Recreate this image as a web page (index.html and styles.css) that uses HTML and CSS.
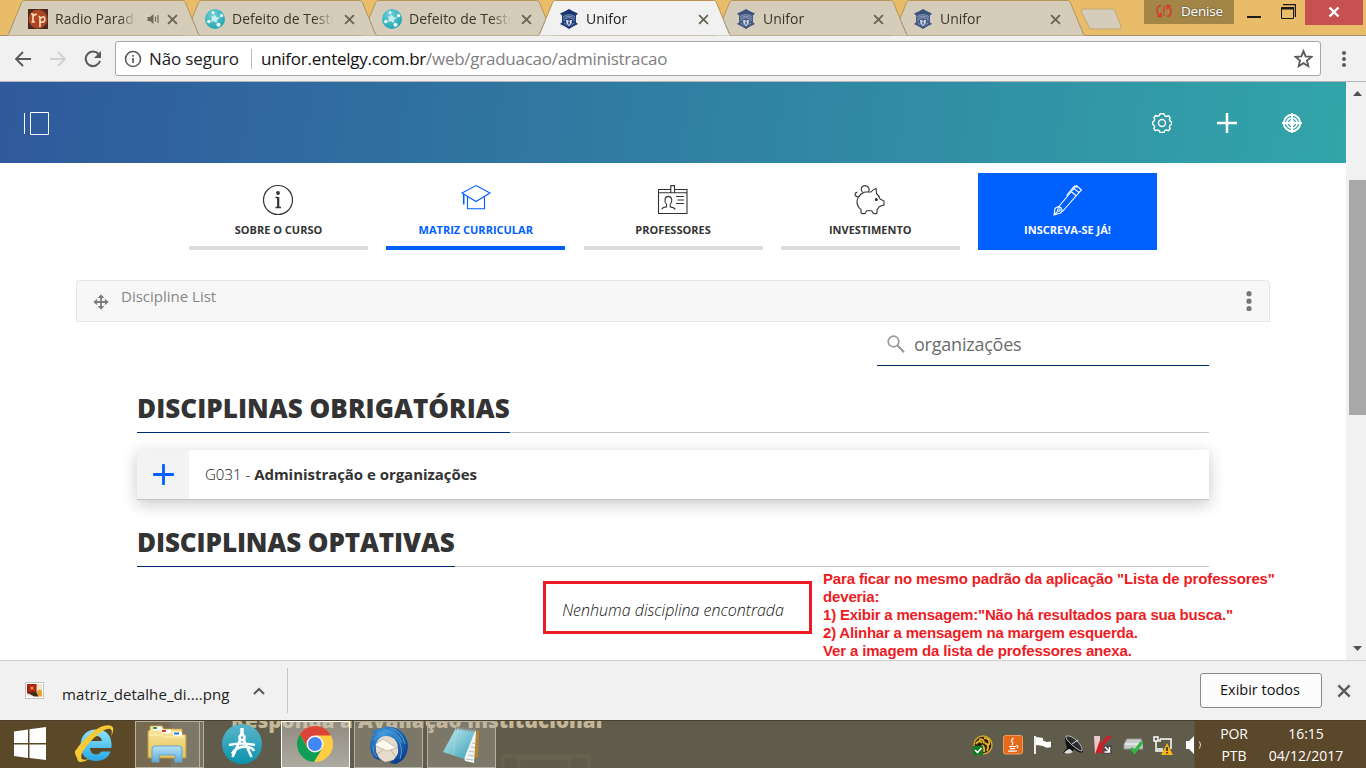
FILE: index.html
```html
<!DOCTYPE html>
<html lang="pt-BR">
<head>
<meta charset="utf-8">
<title>Unifor</title>
<link rel="stylesheet" href="styles.css">
</head>
<body>
<svg class="defs" width="0" height="0">
  <defs>
    <linearGradient id="ieg" x1="0" y1="0" x2="0" y2="1"><stop offset="0" stop-color="#8fe4fb"/><stop offset="1" stop-color="#28a8e6"/></linearGradient>
    <linearGradient id="fold" x1="0" y1="0" x2="0" y2="1"><stop offset="0" stop-color="#fbe9a0"/><stop offset="1" stop-color="#e3c35c"/></linearGradient>
    <linearGradient id="stand" x1="0" y1="0" x2="0" y2="1"><stop offset="0" stop-color="#b6e2f6"/><stop offset="1" stop-color="#5fa9d8"/></linearGradient>
    <linearGradient id="note" x1="0" y1="0" x2="1" y2="1"><stop offset="0" stop-color="#c5eef3"/><stop offset="1" stop-color="#3a9fb4"/></linearGradient>
    <radialGradient id="bird" cx=".35" cy=".25" r=".8"><stop offset="0" stop-color="#3f9be0"/><stop offset="1" stop-color="#0c3f8c"/></radialGradient>
    <radialGradient id="teal" cx=".4" cy=".3" r=".8"><stop offset="0" stop-color="#6fd0da"/><stop offset="1" stop-color="#18a0ae"/></radialGradient>
    <linearGradient id="circ" x1="0" y1="0" x2="0" y2="1"><stop offset="0" stop-color="#5ab6cb"/><stop offset="1" stop-color="#0b93ae"/></linearGradient>
    <symbol id="globe" viewBox="0 0 20 20">
      <circle cx="10" cy="10" r="10" fill="url(#teal)"/>
      <g stroke="#8fdbe0" stroke-width=".7" fill="none"><path d="M10 10 8 3M10 10l7-3M10 10l4 6M10 10l-6 2"/></g>
      <path d="M9.500 5.500l2 2.500 3 1-2.500 2-.5 3-2.500-1.700-3 .3 1-2.800L6 7.500l2.700-.2z" fill="#c9eeee"/><circle cx="8" cy="3.600" r="1.400" fill="#fff"/><circle cx="16.600" cy="6.600" r="1.600" fill="#fff"/><circle cx="13.500" cy="15.800" r="2" fill="#fff"/><circle cx="3.800" cy="12.600" r="1.700" fill="#fff"/>
    </symbol>
    <symbol id="crest" viewBox="0 0 20 20">
      <path d="M10 0l4 2.200 5 2.300-2 2H3l-2-2 5-2.300zM1 15l2.500-2h13l2.500 2-5 2.500-4 2.500-4-2.500z" fill="#15336f"/>
      <path d="M3 5h14v9.500l-4 3H7l-4-3z" fill="#233f7b"/>
      <g fill="none" stroke="#93a4c7" stroke-width=".8"><path d="M4 8a7 4.500 0 0 1 12 0M4 10.200a6.500 4.800 0 0 1 12 0M4.500 12.200a5.700 4.800 0 0 1 11 0M5 14l2.500 2M15 14l-2.500 2"/></g>
      <path d="M7 11h1.500l1.500 1 1.500-1H13l-.5 3.500-2.500 3-2.500-3z" fill="#d5dce9"/><path d="M9.300 12.500h1.400v3H9.300z" fill="#15336f"/>
    </symbol>
    <symbol id="x" viewBox="0 0 10 10"><path d="M1 1l8 8M9 1L1 9" stroke="currentColor" stroke-width="1.700"/></symbol>
    <symbol id="shape" viewBox="0 0 193 36">
      <path d="M0 35.500C1 35 1.600 34 2 33L14 4C14.700 2 15.500 .5 17.500 .5H175.500C177.500 .5 178.300 2 179 4L191 33C191.400 34 192 35 193 35.500" fill="currentColor" stroke="#b59455"/>
      <path d="M7 21L1.500 34M186 21L191.500 34" stroke="#a99f8c" fill="none"/>
    </symbol>
  </defs>
</svg>

<header class="tabstrip">
  <div class="tabs">
    <div class="tab t1"><svg class="shape"><use href="#shape"/></svg>
      <svg class="fav" viewBox="0 0 20 20"><rect width="20" height="20" fill="#4a2a1d"/><circle cx="10" cy="10" r="9.500" fill="#ad4526"/><path d="M3 5h2v8M3.500 13H7M5 7.500Q6 5 9 5.500M12 7.500V18M10.500 7.500H12M12 9.500Q16.500 6 16.800 10T12 13" stroke="#f7d9ad" stroke-width="1.700" fill="none"/></svg>
      <span class="name short">Radio Paradise</span>
      <svg class="snd" viewBox="0 0 12 12"><path d="M0 4h2.500L6 1v10L2.500 8H0z" fill="#716b5e"/><path d="M8 3.500v5M10.500 2v8" stroke="#716b5e" stroke-width="1.200"/></svg>
      <svg class="cls"><use href="#x"/></svg></div>
    <div class="tab t2"><svg class="shape"><use href="#shape"/></svg><svg class="fav"><use href="#globe"/></svg><span class="name">Defeito de Teste</span><svg class="cls"><use href="#x"/></svg></div>
    <div class="tab t3"><svg class="shape"><use href="#shape"/></svg><svg class="fav"><use href="#globe"/></svg><span class="name">Defeito de Teste</span><svg class="cls"><use href="#x"/></svg></div>
    <div class="tab t4 on"><svg class="shape"><use href="#shape"/></svg><svg class="fav"><use href="#crest"/></svg><span class="name">Unifor</span><svg class="cls"><use href="#x"/></svg></div>
    <div class="tab t5"><svg class="shape"><use href="#shape"/></svg><svg class="fav dim"><use href="#crest"/></svg><span class="name">Unifor</span><svg class="cls"><use href="#x"/></svg></div>
    <div class="tab t6"><svg class="shape"><use href="#shape"/></svg><svg class="fav dim"><use href="#crest"/></svg><span class="name">Unifor</span><svg class="cls"><use href="#x"/></svg></div>
  </div>
  <svg class="newtab" viewBox="0 0 42 22"><path d="M3 1h29q2 0 3 2l6 15q1 3-2 3H12q-2 0-3-2L1.500 4Q.5 1 3 1z" fill="#d5ccba" stroke="#c2a873"/></svg>
  <div class="user"><svg width="16" height="14" viewBox="0 0 16 14"><path d="M5 1.500Q1 2 1 6t3.500 6M1 12.500h4V8.500M11 12.500Q15 12 15 8t-3.500-6M15 1.500h-4V5.500" stroke="#d23f2e" stroke-width="1.700" fill="none"/><path d="M8 2v6M8 9.500v2" stroke="#d23f2e" stroke-width="1.600"/></svg><span>Denise</span></div>
  <svg class="min" viewBox="0 0 14 2"><rect width="14" height="2" fill="#1e1a14"/></svg>
  <svg class="restore" viewBox="0 0 15 15"><path d="M2 .5h12.500V13" stroke="#1e1a14" fill="none" stroke-width="1.500"/><path d="M.5 3.500h12v11H.5z" stroke="#1e1a14" fill="none"/><path d="M0 4.500h13" stroke="#1e1a14" stroke-width="2"/></svg>
  <div class="close"><svg width="12" height="10" viewBox="0 0 12 10"><path d="M1.500 .5l9 9M10.500 .5l-9 9" stroke="#fff" stroke-width="2.400"/></svg></div>
</header>

<div class="toolbar">
  <svg class="back" viewBox="0 0 16 16"><path d="M16 8H1.500M8 1L1 8l7 7" stroke="#5a5a5a" stroke-width="1.900" fill="none"/></svg>
  <svg class="fwd" viewBox="0 0 16 16"><path d="M0 8h14.500M8 1l7 7-7 7" stroke="#d1d1d1" stroke-width="1.900" fill="none"/></svg>
  <svg class="reload" viewBox="0 0 18 18"><path d="M14.500 4A7.300 7.300 0 1 0 16 11" stroke="#5a5a5a" stroke-width="2.100" fill="none"/><path d="M17 1v7h-7z" fill="#5a5a5a"/></svg>
  <div class="omni">
    <svg class="info" viewBox="0 0 18 18"><circle cx="9" cy="9" r="7.500" stroke="#5a5a5a" stroke-width="1.600" fill="none"/><path d="M9 8v5M9 5v1.700" stroke="#5a5a5a" stroke-width="1.700"/></svg>
    <span class="sec">Não seguro</span><i class="bar"></i>
    <span class="url"><b>unifor.entelgy.com.br</b>/web/graduacao/administracao</span>
    <svg class="star" viewBox="0 0 18 18"><path d="M9 2l2 5 5.500.4-4.200 3.600 1.300 5.300L9 13.400l-4.600 2.900L5.700 11 1.500 7.400 7 7z" fill="none" stroke="#5a5a5a" stroke-width="1.700"/></svg>
  </div>
  <svg class="dots" viewBox="0 0 4 16"><g fill="#5a5a5a"><circle cx="2" cy="2" r="2"/><circle cx="2" cy="8" r="2"/><circle cx="2" cy="14" r="2"/></g></svg>
</div>

<div class="view">
  <main class="page">
    <div class="hero">
      <svg class="menu" viewBox="0 0 26 24"><path d="M.5 1v21M6.500 .5h18v22h-18z" stroke="#fff" fill="none"/></svg>
      <div class="tools">
        <svg width="20" height="20" viewBox="0 0 20 20" fill="none" stroke="#fff" stroke-width="1.400"><circle cx="10" cy="10" r="3.500"/><path d="M8 .8h4l.7 2 1.800.7 2-.9 1.600 2-.7 2 .8 1.700 1.400.7v2.200l-1.400.8-.8 1.700.7 2-1.700 2-2-.9-1.700.8-.7 1.800H8l-.7-1.800-1.800-.8-2 .9-1.600-2 .7-2-.8-1.700L.7 11.200V9l1.200-.8.8-1.700-.7-2 1.600-2 2 .9 1.700-.7z" stroke-linejoin="round"/></svg>
        <svg width="20" height="20" viewBox="0 0 20 20"><path d="M10 0v20M0 10h20" stroke="#fff" stroke-width="2.500"/></svg>
        <svg width="20" height="20" viewBox="0 0 20 20" fill="none" stroke="#fff"><circle cx="10" cy="10" r="8.200" stroke-width="2"/><circle cx="10" cy="10" r="5.200" stroke-width="1.800"/><circle cx="10" cy="10" r="2.300" stroke-width="1.200"/><path d="M10 0v20M0 10h20" stroke-width="2"/></svg>
      </div>
    </div>
    <nav class="menu-course">
      <a class="item"><svg class="info-icon" width="32" height="32" viewBox="0 0 32 32"><circle cx="16" cy="16" r="14.500" fill="none" stroke="#333" stroke-width="1.200"/><circle cx="16" cy="9" r="1.900" fill="#333"/><path d="M13.500 13.500h2.500M13.500 23.500h5.500" stroke="#333" fill="none" stroke-width="1.300"/><path d="M16.200 13v11" stroke="#333" stroke-width="2.200"/></svg><span>SOBRE O CURSO</span></a>
      <a class="item active"><svg width="32" height="32" viewBox="0 0 32 32" fill="none" stroke="#0060ff" stroke-width="1.100"><path d="M16 1.500L30 9 16 17.500 2 9zM7.500 12.500v12.300h17V12.500"/><path d="M3.700 10v10.500" stroke-width="1.600"/></svg><span>MATRIZ CURRICULAR</span></a>
      <a class="item"><svg width="32" height="32" viewBox="0 0 32 32" fill="none" stroke="#333" stroke-width="1.100"><path d="M13.500 5.500H1.500v24h28.500v-24H18M1.500 8.700h12M18 8.700h12M13.800 1.600h3.700v7.200h-3.700zM19 12.500h8M20.500 16h6.500M19 19.500h8"/><path d="M5 25.500q0-2 4.500-2.600v-2.500q-2-2-1.500-5 .5-3 3.300-3t3.400 3q.5 3-1.500 5v2.500q4 .6 5 2.500"/></svg><span>PROFESSORES</span></a>
      <a class="item"><svg width="32" height="32" viewBox="0 0 32 32" fill="none" stroke="#333" stroke-width="1.100"><path d="M4.500 13Q7 9 11 8h6q2.500-3 5-3.500l.5 5Q25.500 12 26 15l4 2v4l-4.500 1.500L23 26v3q-1.500 1.500-4 0l-1.200-2.200h-5L11 29.500q-2.500.5-4-.5v-3.300Q2.700 22 3 17q.3-2.500 1.500-4zM4.500 13Q1 12.500 1 10.500q.3-2.500 2.500-2.300"/><path d="M8.500 8Q6 5 8.500 2.500 11.500 .5 14 3q2 2 .5 5"/><circle cx="22.300" cy="15.500" r="1" fill="#333"/></svg><span>INVESTIMENTO</span></a>
      <a class="item cta"><svg width="32" height="32" viewBox="0 0 32 32" fill="none" stroke="#fff" stroke-width="1.100"><path d="M6 23.500L22 4.500l5 4-16.500 19M22 4.500l2.500-3 5 4.500-2.500 2.500M14.500 11.500L22.500 2l3 1M19 7.500l5 4M2 31l1-6.500q3-3 6.200-.5 2 3-.7 5zM2 31l3.500-3.500"/><circle cx="6.800" cy="26" r="1.300"/></svg><span>INSCREVA-SE JÁ!</span></a>
    </nav>
    <section class="portlet">
      <svg class="move" viewBox="0 0 16 16"><path d="M8 2v12M2 8h12" stroke="#7c7c7c" stroke-width="1.800"/><path d="M8 .3l3.300 3.800H4.700zM8 15.700l3.300-3.800H4.700zM.3 8l3.800-3.300v6.600zM15.700 8l-3.800-3.300v6.600z" fill="#7c7c7c"/></svg>
      <span class="ptitle">Discipline List</span>
      <svg class="pdots" viewBox="0 0 6 20"><g fill="#777"><circle cx="3" cy="2.700" r="2.600"/><circle cx="3" cy="10.200" r="2.600"/><circle cx="3" cy="17.700" r="2.600"/></g></svg>
    </section>
    <div class="content">
      <div class="search"><svg width="18" height="18" viewBox="0 0 18 18" fill="none" stroke="#999"><circle cx="6.500" cy="6.500" r="5.300" stroke-width="1.700"/><path d="M10.300 10.300l6.700 7" stroke-width="2.100"/></svg><span>organizações</span></div>
      <h2 class="h-one"><span>DISCIPLINAS OBRIGATÓRIAS</span></h2>
      <div class="card"><div class="plus"><svg width="21" height="21" viewBox="0 0 21 21"><path d="M10.500 1v19M1 10.500h19" stroke="#0060ff" stroke-width="2.800" stroke-linecap="round"/></svg></div><p>G031 - <b>Administração e organizações</b></p></div>
      <h2 class="h-two"><span>DISCIPLINAS OPTATIVAS</span></h2>
      <p class="empty">Nenhuma disciplina encontrada</p>
    </div>
    <div class="mark"></div>
    <div class="note">Para ficar no mesmo padrão da aplicação "Lista de professores"<br>deveria:<br><span>1) Exibir a mensagem:"Não há resultados para sua busca."</span><br><span>2) Alinhar a mensagem na margem esquerda.</span><br>Ver a imagem da lista de professores anexa.</div>
  </main>
  <div class="scroll">
    <svg width="9" height="5" viewBox="0 0 9 5"><path d="M0 5L4.500 0 9 5z" fill="#505050"/></svg>
    <div class="thumb"></div>
    <svg class="down" width="9" height="5" viewBox="0 0 9 5"><path d="M0 0l4.500 5L9 0z" fill="#505050"/></svg>
  </div>
</div>

<div class="downloads">
  <div class="file">
    <svg width="19" height="17" viewBox="0 0 19 17"><path d="M.5 .5h18v16H.5z" fill="#fff" stroke="#c2c2c2"/><path d="M2 2h15v12.500H2z" fill="#f1e6cc"/><path d="M2 2h9.500v8L8 11.500H2z" fill="#a51d13"/><path d="M4 3l6 6M10 3L4 9" stroke="#d8442a"/><circle cx="7" cy="6" r="1.600" fill="#e8a030"/><path d="M3 11l8-1.500 3 5H9z" fill="#403019"/><path d="M12 9l2-1.500 3 1v6h-4z" fill="#eca12c"/></svg>
    <span>matriz_detalhe_di....png</span>
    <svg class="up" width="12" height="8" viewBox="0 0 12 8"><path d="M1 7l5-5 5 5" stroke="#5a5a5a" stroke-width="2" fill="none"/></svg>
  </div>
  <button class="all">Exibir todos</button>
  <svg class="dclose"><use href="#x"/></svg>
</div>

<footer class="taskbar">
  <div class="ghost">Responda a Avaliação Institucional</div>
  <svg class="tb-glow" viewBox="0 0 90 14"><path d="M2 14V2h86v12M18 14V5h50v9" stroke="#757056" stroke-width="3" fill="none"/></svg>
  <div class="apps">
    <div class="app start"><svg width="32" height="33" viewBox="0 0 32 33" fill="#fff"><path d="M0 4.500L14 2.500V16H0zM15.500 2.300L32 0v16H15.500zM0 17.500h14V31L0 29zM15.500 17.500H32V33l-16.500-2z"/></svg></div>
    <div class="app ie"><svg width="40" height="40" viewBox="0 0 40 40"><path d="M21 5.500C11 5.500 5.500 12.500 5.500 21.500S11.500 37 21 37c7.500 0 12.500-3.500 14.500-9.500h-9.500q-1.500 3-5 3-5.500 0-6-6.500h21.500Q37.500 5.500 21 5.500zM15 17q.8-5 6-5t6 5z" fill="url(#ieg)" fill-rule="evenodd"/><path d="M7 24C1 33 1 38 6 38q4-.3 9-3.500-8 3-9-1-.5-5 9-15.500C25 7.500 32 3.500 35.500 5q2.500 1.500.3 8Q41 3.500 35.500 1.500 28-.5 17 8.500 6 18-.5 28 3 38.500 6 38" fill="#f5ca35"/></svg></div>
    <div class="app run explorer"><svg width="40" height="40" viewBox="0 0 40 40"><path d="M3 2h12l2 3h18v5l4 1v23H1V7l2-1z" fill="url(#fold)" stroke="#bd993d"/><path d="M6 2.500h9v4H6zM15 5.500h9v4h-9zM26 8h9v4h-9z" fill="#fff"/><path d="M6 3h4v2H6z" fill="#21a05a"/><path d="M15 6h4v2h-4z" fill="#d23a33"/><path d="M27 8.500h5v2h-5z" fill="#2878d0"/><path d="M2 11h13l2 2h20" stroke="#fff2b3" fill="none"/><path d="M5 38V25q0-3 3-3h24q3 0 3 3v13h-7v-7H12v7z" fill="url(#stand)" stroke="#64a6ca"/></svg></div>
    <div class="app compass"><svg width="40" height="40" viewBox="0 0 40 40"><circle cx="20" cy="20" r="20" fill="url(#circ)"/><g stroke="#fff" fill="none" stroke-width="2.600"><path d="M20 4v6" stroke-width="3.500"/><path d="M18.500 15L10.500 33M21.500 15L29.500 33M7 21q13-3 26 0M10 30q5-9 16-7 5 1 6 4"/><circle cx="20" cy="13.500" r="2.500"/></g></svg></div>
    <div class="app run chrome"><svg width="38" height="38" viewBox="0 0 38 38"><circle cx="19" cy="19" r="18" fill="#ffcd40"/><path d="M19 10.500h15.900A18 18 0 0 0 3.800 9.300L11.600 23.200 19 19z" fill="#db4437"/><path d="M3.800 9.300A18 18 0 0 0 18 37L26.300 23.200 19 19l-7.400 4.200z" fill="#0f9d58"/><circle cx="19" cy="19" r="8.500" fill="#f4f4f4"/><circle cx="19" cy="19" r="6.900" fill="#4285f4"/></svg></div>
    <div class="app run tbird"><svg width="40" height="40" viewBox="0 0 40 40"><path d="M7 14q6-6 14-5 9 4 10 14l-3 11-12 3-9-6z" fill="#e6dbcd"/><path d="M5 20l9-6 14 9-10 3z" fill="#fffaf0" stroke="#bfae98" stroke-width=".8"/><path d="M6 31l9-7M28 34l-6-9" stroke="#bfae98" fill="none"/><path d="M10 4Q19-1 29 4q9 6 10 16 0 14-12 19l-7-1q7-4 9-10Q30 15 22 12q-8-3-13 3-5 7 0 16l3 5Q2 34 1 22 1 13 5 9L3 6z" fill="url(#bird)"/><path d="M9 8q12-4 19 5 7 9 3 21M14 5q14-1 19 13M21 3q12 3 15 16M5 15q4-7 11-6M4 21q0 8 4 11" stroke="#4aa0dc" fill="none"/></svg></div>
    <div class="app run notep"><svg width="40" height="40" viewBox="0 0 40 40"><path d="M33 5l4 1-1 26-6 2z" fill="#b58433"/><path d="M32 5l2 1-2 32-9-2-2-8z" fill="#eef4f5"/><path d="M14 3l19 3-11 28-21-7z" fill="url(#note)"/><path d="M14 3l-3 27" stroke="#a8dce4" opacity=".6"/><path d="M14 3l20 2.500" stroke="#8b9190" stroke-width="3.500" stroke-dasharray="1.500 1.500"/><path d="M26 30l6 1M27 26l5 1M24 34l7 1M29 22l4 .5M30 18l3 .5" stroke="#b4c0c0"/></svg></div>
  </div>
  <div class="tray">
    <svg viewBox="0 0 20 20"><circle cx="10" cy="10" r="9" fill="#2a2011" stroke="#cfa02b" stroke-width="1.500"/><path d="M3 9q3-5 6-1M6 4.500q5-1 5 4M11 3q7 0 5 7M12 8q5 2 2 8M9 10q3 2 2 7" stroke="#e2ae2b" stroke-width="2" fill="none"/><path d="M0 11h10v9H0z" fill="#0d7c20"/><path d="M2 15l2.500 2.500L8.500 13" stroke="#fff" stroke-width="1.600" fill="none"/></svg>
    <svg viewBox="0 0 20 20"><rect x=".5" y=".5" width="19" height="18.500" rx="2" fill="#e66a1b" stroke="#f09a5c"/><path d="M10.500 3q-3 2.500-1 4.500 1 1.500-1 2.500M6 11.500h7M7 13.700h5M5 16.200h9M13 10.500q3 0 1 2.500" stroke="#fff" fill="none" stroke-width="1.200"/></svg>
    <svg viewBox="0 0 20 20"><path d="M2 1v18" stroke="#fff" stroke-width="1.800"/><path d="M3 2l7 1v8l-7-1zM10 5.500l3.500 1.500 4.500-.5v5.500q-4 2-8-1z" fill="#fff"/></svg>
    <svg viewBox="0 0 20 20"><path d="M3 1Q1 3 3 9l1 4-4 5q5 2 9-1l2-3q6 5 9 3 1-3-4-9Q8-1 3 1z" fill="#111"/><path d="M3 1q5-1 11 5t5 10q-3 0-10-6T3 1z" fill="#2b2b2b" stroke="#ddd" stroke-width=".8"/><path d="M9 9l6-4" stroke="#ddd"/><path d="M1 18q3-4 6-4l3 3q-4 3-9 1z" fill="#ddd"/></svg>
    <svg viewBox="0 0 20 20"><path d="M1 1h6v8l7-8h5l-8 9 2 8H2z" fill="#cc2029"/><path d="M1 1h6v4L2 19z" fill="#ecc9c8"/><path d="M10 10h9v9h-9z" fill="#4b4b4b"/><path d="M12 12l4 4M16.500 12v5h-5" stroke="#fff" stroke-width="1.400" fill="none"/></svg>
    <svg viewBox="0 0 20 20"><path d="M4 4h14l2 5v5H1V9z" fill="#c8cbcc" stroke="#999"/><path d="M2 9h17" stroke="#fff"/><path d="M8 13l3.500 4L19 7" stroke="#36b545" stroke-width="3.300" fill="none"/></svg>
    <svg viewBox="0 0 20 20"><path d="M1 2h4v4H1zM3 6v10h7M7 4h11v10M7 4v3M4 14h6" stroke="#fff" stroke-width="1.500" fill="none"/><path d="M14 8l6 12H8z" fill="#f5b51b"/><path d="M14 12v4M14 17v1.500" stroke="#292316" stroke-width="1.500"/></svg>
    <svg viewBox="0 0 20 20"><path d="M3 6h3l5-5v18l-5-5H3z" fill="#fff"/><path d="M16.500 6.500q2 3.500 0 7" stroke="#ddd" fill="none"/></svg>
  </div>
  <div class="clock"><div class="lang">POR<br>PTB</div><div class="time">16:15<br>04/12/2017</div></div>
</footer>
</body>
</html>
```
FILE: styles.css
```css
* { box-sizing: border-box; }
body { margin: 0; width: 1366px; height: 768px; overflow: hidden; display: flex; flex-direction: column; font-family: "Open Sans", "Noto Sans", sans-serif; background: #fff; }
svg { display: block; flex: none; }
.defs { position: absolute; }
p, h2 { margin: 0; }

.tabstrip { height: 36px; flex: none; display: flex; align-items: flex-start; background: #e9bc6a; padding-left: 7px; border-bottom: 1px solid #a58f62; }
.tabs { display: flex; flex: none; }
.tab { position: relative; width: 193px; height: 36px; margin-right: -16px; padding-left: 21px; display: flex; align-items: center; color: #d5ccba; }
.shape { position: absolute; left: 0; top: 0; width: 193px; height: 36px; }
.tab.on { color: #f1f1f1; }
.t1 { z-index: 5; } .t2 { z-index: 4; } .t3 { z-index: 3; } .t4 { z-index: 6; } .t5 { z-index: 2; } .t6 { z-index: 1; }
.fav { position: relative; width: 20px; height: 20px; margin-top: 2px; }
.dim { opacity: .8; }
.name { position: relative; margin-left: 7px; width: 102px; font-size: 14px; color: #3a3429; white-space: nowrap; overflow: hidden; -webkit-mask-image: linear-gradient(90deg, #000 80%, transparent); }
.name.short { width: 81px; }
.on .name { color: #222; }
.snd { position: relative; width: 13px; height: 12px; margin: 2px 0 0 11px; }
.cls { position: relative; width: 11px; height: 11px; margin: 2px 0 0 7px; color: #6a6456; }
.name:not(.short) + .cls { margin-left: 10px; }
.t5 .cls, .t6 .cls { margin-left: 8px !important; }
.newtab { width: 42px; height: 22px; margin: 8px 0 0 11px; }
.user { width: 90px; height: 24px; margin-left: 22px; background: #a38548; display: flex; align-items: center; padding: 0 0 2px 12px; color: #fff; font-size: 13.500px; letter-spacing: -.2px; text-shadow: 0 0 2px #443; }
.user span { margin-left: 9px; }
.min { width: 14px; height: 2px; margin: 16px 0 0 13px; }
.restore { width: 15px; height: 15px; margin: 4px 0 0 20px; }
.close { width: 58px; height: 25px; margin-left: 9px; background: #c75050; display: flex; align-items: center; justify-content: center; padding-bottom: 2px; }

.toolbar { height: 46px; flex: none; background: #f1f1f1; border-bottom: 1px solid #b6b4b6; display: flex; align-items: center; padding-left: 15px; }
.back, .fwd { width: 16px; height: 16px; }
.fwd { margin-left: 19px; }
.reload { width: 18px; height: 18px; margin-left: 18px; }
.omni { width: 1206px; height: 35px; margin: 0 0 0 13px; border: 1px solid #a6a6a6; border-radius: 3px; background: #fff; display: flex; align-items: center; padding-left: 8px; font-size: 17px; }
.info { width: 18px; height: 18px; }
.sec { margin-left: 7px; width: 91px; letter-spacing: -.15px; color: #222; white-space: nowrap; }
.bar { width: 1px; height: 20px; margin-left: 11px; background: #bbb; }
.url { margin-left: 9px; color: #808080; white-space: nowrap; letter-spacing: -.26px; }
.url b { font-weight: 400; color: #111; }
.star { width: 19px; height: 19px; margin: 0 7px 0 auto; }
.dots { width: 4px; height: 16px; margin-left: 21px; }

.view { flex: 1; min-height: 0; display: flex; }
.page { position: relative; width: 1346px; overflow: hidden; }
.hero { height: 81px; display: flex; align-items: center; padding: 0 44px 0 24px; background: linear-gradient(97deg, #2f599c, #32a5a9); }
.menu { width: 26px; height: 24px; margin-top: 2px; }
.tools { margin-left: auto; display: flex; gap: 45px; }
.menu-course { display: flex; gap: 18.250px; margin: 10px 0 0 189px; }
.item { width: 179px; height: 77px; display: flex; flex-direction: column; align-items: center; padding-top: 11px; border-bottom: 4px solid #ddd; color: #333; font-size: 11px; font-weight: 700; line-height: 15px; }
.item span { margin-top: 6px; }
.info-icon { margin-right: 2px; }
.item.active { color: #0060ff; border-color: #0060ff; }
.item.cta { background: #0060ff; border-color: #0060ff; color: #fff; }
.portlet { width: 1194px; height: 42px; margin: 30px 0 0 76px; border: 1px solid #e5e5e5; border-radius: 4px 4px 0 0; background: #f7f7f7; display: flex; padding-left: 16px; }
.move { width: 16px; height: 16px; margin-top: 13px; }
.ptitle { margin: 5px 0 0 12px; font-size: 15px; line-height: 20px; color: #868686; }
.pdots { width: 6px; height: 20px; margin: 10px 17px 0 auto; }
.content { width: 1072px; margin-left: 137px; }
.search { width: 332px; height: 44px; margin-left: auto; border-bottom: 1px solid #002a60; display: flex; align-items: center; padding: 0 0 0 10px; color: #6c6c6c; font-size: 18px; letter-spacing: -.22px; }
.search span { margin-left: 9px; }
h2 { border-bottom: 1px solid #c4c4c4; height: 49px; font-size: 26px; font-weight: 800; line-height: 48px; color: #333; display: flex; }
h2 span { border-bottom: 1px solid #002a70; height: 49px; white-space: nowrap; }
.h-one { margin-top: 18px; letter-spacing: .05px; }
.h-two { margin-top: 18px; letter-spacing: -.1px; }
.card { height: 50px; margin-top: 17px; border-bottom: 1px solid #c4c4c4; background: #fff; box-shadow: 0 4px 16px rgba(0,0,0,.22); display: flex; align-items: center; font-size: 15px; color: #333; }
.card p { margin: -2px 0 0 16px; font-weight: 300; color: #111; }
.card b { font-weight: 700; letter-spacing: -.04px; color: #333; }
.plus { width: 52px; height: 49px; background: #f3f3f3; display: flex; align-items: center; justify-content: center; }
.empty { margin-top: 32px; text-align: center; font-size: 16px; font-style: italic; font-weight: 300; line-height: 22px; color: #111; }
.mark { position: absolute; left: 543px; top: 499px; width: 269px; height: 53px; border: 3px solid #ed1c24; }
.note { position: absolute; left: 823px; top: 488px; font: bold 15px/18px "Liberation Sans", sans-serif; letter-spacing: -.15px; color: #ed1c24; white-space: nowrap; }
.note span { letter-spacing: -.2px; }
.scroll { width: 20px; background: #f1f1f1; display: flex; flex-direction: column; align-items: center; padding: 9px 0 9px 2px; }
.thumb { width: 17px; height: 235px; margin-top: 84px; background: #a8a8a8; }
.down { margin-top: auto; }

.downloads { height: 60px; flex: none; background: #f1f1f1; border-top: 1px solid #d0d0d0; display: flex; align-items: center; }
.file { width: 288px; height: 45px; border-right: 1px solid #c6c6c6; padding-left: 25px; display: flex; align-items: center; font-size: 15px; color: #222; }
.file span { margin: 7px 0 0 18px; width: 168px; white-space: nowrap; letter-spacing: .08px; }
.up { margin-left: 23px; }
.all { margin-left: auto; width: 122px; height: 35px; border: 1px solid #8a8a8a; border-radius: 3px; background: #fcfcfc; font: 14.500px "Open Sans", sans-serif; color: #111; padding: 0 2px 2px 0; }
.dclose { width: 14px; height: 14px; margin: 0 15px 0 15px; color: #5a5a5a; }

.taskbar { position: relative; height: 48px; flex: none; overflow: hidden; display: flex; align-items: center; background: linear-gradient(90deg, #5b4829 0 170px, #5f5c4b 172px 1194px, #5b4729 1195px); border-top: 1px solid #4d402a; }
.ghost { position: absolute; left: 231px; top: -14px; font: 800 20.600px/26px "Open Sans", sans-serif; color: #c6b896; white-space: nowrap; }
.tb-glow { position: absolute; left: 481px; top: 33px; width: 130px; height: 14px; opacity: .3; }
.apps { display: flex; position: relative; height: 47px; }
.app { width: 69px; height: 47px; display: flex; align-items: center; justify-content: center; margin-right: 4px; }
.run { border: 1px solid #b3b0a6; background: rgba(190,186,174,.3); }
.start { width: 60px; margin: 0; padding-bottom: 2px; }
.ie { width: 70px; margin: 0 5px 0 0; padding-bottom: 2px; }
.explorer { padding: 0 5px 2px 0; box-shadow: inset -3px 0 0 #77725f, inset -4px 0 0 #b3b0a6; }
.compass { padding: 0 1px 2px 0; }
.chrome { background: linear-gradient(rgba(205,198,192,.45), rgba(225,222,218,.6)); border-color: #fff; padding: 0 1px 2px 0; }
.tray { margin-left: auto; display: flex; gap: 10px; position: relative; margin-right: 17px; }
.tray svg { width: 20px; height: 20px; }
.clock { display: flex; width: 146px; color: #fff; font-size: 14px; line-height: 22px; text-align: center; padding-top: 1px; }
.lang { width: 28px; letter-spacing: -.1px; }
.time { width: 78px; margin-left: 19px; white-space: nowrap; }
```
